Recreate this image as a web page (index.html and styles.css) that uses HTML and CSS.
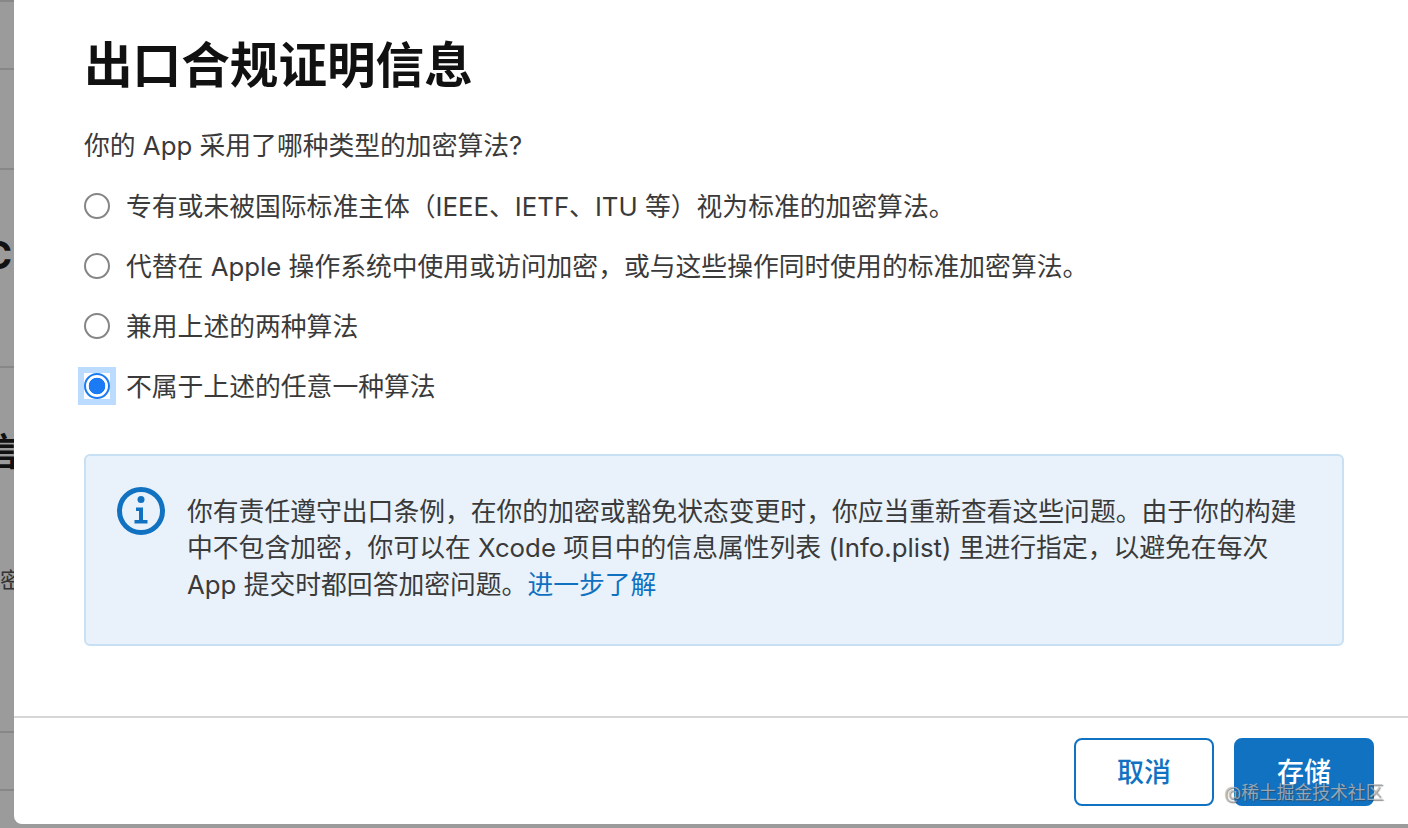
FILE: index.html
```html
<!DOCTYPE html>
<html lang="zh-CN">
<head>
    <meta charset="UTF-8">
    <meta name="viewport" content="width=device-width, initial-scale=1.0">
    <title>出口合规证明信息</title>
    <link rel="stylesheet" href="styles.css">
</head>
<body>
    <div class="backdrop">
        <div class="bg-row bg-row-a"></div>
        <div class="bg-row bg-row-b"></div>
        <div class="bg-row bg-row-c"><span class="bg-heading">C</span></div>
        <div class="bg-row bg-row-d">
            <span class="bg-heading bg-heading-cjk">信</span>
            <span class="bg-small">密</span>
        </div>
        <div class="bg-row bg-row-e"></div>
    </div>
    <div class="modal">
        <div class="modal-body">
            <h1>出口合规证明信息</h1>
            <p class="question">你的 App 采用了哪种类型的加密算法?</p>
            <div class="options">
                <label class="option">
                    <span class="radio-wrap"><input type="radio" name="algo"></span>
                    <span class="option-text">专有或未被国际标准主体（IEEE、IETF、ITU 等）视为标准的加密算法。</span>
                </label>
                <label class="option">
                    <span class="radio-wrap"><input type="radio" name="algo"></span>
                    <span class="option-text">代替在 Apple 操作系统中使用或访问加密，或与这些操作同时使用的标准加密算法。</span>
                </label>
                <label class="option">
                    <span class="radio-wrap"><input type="radio" name="algo"></span>
                    <span class="option-text">兼用上述的两种算法</span>
                </label>
                <label class="option">
                    <span class="radio-wrap focused"><input type="radio" name="algo" checked></span>
                    <span class="option-text">不属于上述的任意一种算法</span>
                </label>
            </div>
            <div class="info">
                <svg class="info-icon" width="50" height="50" viewBox="0 0 50 50">
                    <circle cx="25" cy="25" r="21.5" fill="none" stroke="#1272c2" stroke-width="5"/>
                    <circle cx="25" cy="13.5" r="3.5" fill="#1272c2"/>
                    <path d="M20 21.5h7v12.5h4.5v3.5h-13v-3.5h4.5v-9h-3z" fill="#1272c2"/>
                </svg>
                <p>你有责任遵守出口条例，在你的加密或豁免状态变更时，你应当重新查看这些问题。由于你的构建中不包含加密，你可以在 Xcode 项目中的信息属性列表 (Info.plist) 里进行指定，以避免在每次 App 提交时都回答加密问题。<a href="#">进一步了解</a></p>
            </div>
        </div>
        <div class="modal-footer">
            <button class="btn btn-cancel">取消</button>
            <button class="btn btn-save">存储</button>
        </div>
    </div>
    <div class="watermark">@稀土掘金技术社区</div>
</body>
</html>
```

FILE: styles.css
```css
html, body {
    height: 100%;
}
body {
    margin: 0;
    display: flex;
    align-items: flex-start;
    height: 828px;
    overflow: hidden;
    background-color: #9b9b9b;
    font-family: Inter, "Liberation Sans", "Noto Sans CJK SC", sans-serif;
    color: #3a3a3a;
}
.backdrop {
    width: 14px;
    flex-shrink: 0;
    height: 828px;
    overflow: hidden;
    border-top: 2px solid #878787;
    box-sizing: border-box;
}
.bg-row {
    display: flex;
    flex-direction: column;
    align-items: flex-end;
    box-sizing: border-box;
    border-bottom: 2px solid #878787;
    white-space: nowrap;
}
.bg-row-a { height: 68px; }
.bg-row-b { height: 100px; }
.bg-row-c { height: 198px; padding-top: 62px; }
.bg-row-d { height: 365px; padding-top: 60px; }
.bg-row-e { height: 58px; }
.bg-heading {
    font-size: 38px;
    line-height: 46px;
    font-weight: 700;
    color: #111;
    margin-right: 2px;
}
.bg-heading-cjk {
    margin-right: -4px;
}
.bg-small {
    font-size: 22px;
    line-height: 30px;
    color: #333;
    margin-top: 91px;
    margin-right: -8px;
}
.modal {
    flex: 1;
    height: 824px;
    display: flex;
    flex-direction: column;
    box-sizing: border-box;
    background: #fff;
    border-bottom-left-radius: 8px;
}
.modal-body {
    flex: 1;
    padding: 36px 64px 0 70px;
}
h1 {
    margin: 0;
    font-size: 48.6px;
    line-height: 60px;
    font-weight: 700;
    color: #111;
}
.question {
    margin: 32px 0 0;
    font-size: 25.8px;
    line-height: 36px;
}
.options {
    display: flex;
    flex-direction: column;
    gap: 24px;
    margin-top: 24px;
}
.option {
    display: flex;
    align-items: center;
    gap: 16px;
    height: 36px;
    font-size: 25.8px;
    white-space: nowrap;
}
.option-text {
    padding-bottom: 4px;
}
.radio-wrap {
    display: block;
    width: 26px;
    height: 26px;
    background: #fff;
}
.radio-wrap.focused {
    outline: 6px solid #bcdcff;
}
input[type="radio"] {
    appearance: none;
    display: block;
    box-sizing: border-box;
    width: 26px;
    height: 26px;
    margin: 0;
    border: 2px solid #858585;
    border-radius: 50%;
    background: #fff;
}
input[type="radio"]:checked {
    border-color: #1a7bf5;
    background: radial-gradient(circle, #1a7bf5 0 8px, #fff 8.6px);
}
.info {
    display: flex;
    gap: 21px;
    box-sizing: border-box;
    height: 192px;
    margin-top: 50px;
    padding: 30px 30px 0 30px;
    background: #e9f2fb;
    border: 2px solid #c7e0f3;
    border-radius: 6px;
}
.info-icon {
    flex-shrink: 0;
}
.info p {
    margin: 8px 0 0;
    font-size: 25.8px;
    line-height: 36.3px;
}
.info a {
    color: #0f70c0;
    text-decoration: none;
}
.modal-footer {
    display: flex;
    justify-content: flex-end;
    gap: 20px;
    padding: 20px 34px 18px 0;
    border-top: 2px solid #d6d6d6;
}
.btn {
    width: 140px;
    height: 68px;
    box-sizing: border-box;
    padding: 0 0 4px;
    border-radius: 8px;
    border: 2px solid #1272c2;
    font-family: inherit;
    font-size: 27px;
    font-weight: 500;
    cursor: pointer;
}
.btn-cancel {
    background: #fff;
    color: #1272c2;
}
.btn-save {
    background: #1272c2;
    color: #fff;
}
.watermark {
    position: absolute;
    left: 1224px;
    top: 780px;
    font-size: 17.8px;
    line-height: 26px;
    white-space: nowrap;
    color: rgba(190, 190, 190, 0.75);
    text-shadow: 1px 1px 1px rgba(60, 60, 60, 0.6);
}
```
